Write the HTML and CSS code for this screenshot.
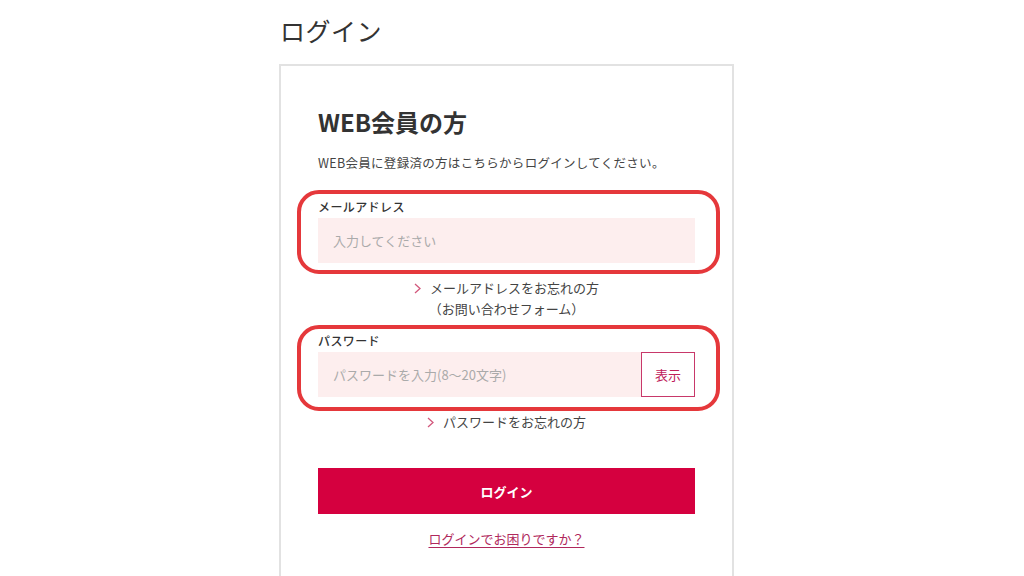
FILE: index.html
```html
<!DOCTYPE html>
<html lang="ja">
<head>
<meta charset="utf-8">
<title>ログイン</title>
<link rel="stylesheet" href="styles.css">
</head>
<body>
<main class="page">
  <h1 class="page-title">ログイン</h1>
  <section class="card">
    <h2 class="card-title">WEB会員の方</h2>
    <p class="lead">WEB会員に登録済の方はこちらからログインしてください。</p>

    <div class="field field-email">
      <label class="field-label">メールアドレス</label>
      <div class="input-row">
        <span class="input">入力してください</span>
      </div>
    </div>
    <div class="help help-email">
      <a class="help-link"><svg class="chev" viewBox="0 0 7 11" width="7" height="11"><polyline points="1,1 6,5.5 1,10" fill="none" stroke="#d2587c" stroke-width="1.3"/></svg>メールアドレスをお忘れの方<br>（お問い合わせフォーム）</a>
    </div>

    <div class="field field-pass">
      <label class="field-label">パスワード</label>
      <div class="input-row">
        <span class="input">パスワードを入力(8〜20文字)</span>
        <span class="show-btn">表示</span>
      </div>
    </div>
    <div class="help help-pass">
      <a class="help-link"><svg class="chev" viewBox="0 0 7 11" width="7" height="11"><polyline points="1,1 6,5.5 1,10" fill="none" stroke="#d2587c" stroke-width="1.3"/></svg>パスワードをお忘れの方</a>
    </div>

    <button class="login-btn" type="button">ログイン</button>
    <div class="trouble"><a class="trouble-link">ログインでお困りですか？</a></div>
  </section>
</main>
</body>
</html>
```

FILE: styles.css
```css
* { box-sizing: border-box; }
html, body { margin: 0; padding: 0; background: #fff; }
body {
  font-family: "Noto Sans CJK JP", "Noto Sans", sans-serif;
  color: #333;
  height: 576px;
  overflow: hidden;
}
.page {
  width: 455px;
  margin-left: 279px;
  padding-top: 12px;
}
.page-title {
  margin: 0 0 16px 1px;
  font-size: 25px;
  line-height: 36px;
  font-weight: 400;
  color: #333;
  letter-spacing: 0.5px;
}
.card {
  border: 2px solid #e2e2e2;
  border-bottom: none;
  padding: 40px 37px 40px;
  min-height: 520px;
}
.card-title {
  margin: 0;
  font-size: 24px;
  line-height: 32px;
  font-weight: 700;
  color: #333;
}
.lead {
  margin: 15px 0 0;
  font-size: 12.5px;
  line-height: 20px;
  letter-spacing: 0.3px;
  color: #444;
}
.field {
  position: relative;
}
.field::before {
  content: "";
  position: absolute;
  left: -21px;
  right: -25px;
  border: 4px solid #e5383b;
  border-radius: 22px;
  pointer-events: none;
}
.field-email { margin-top: 25px; }
.field-email::before { top: -8px; bottom: -11px; }
.field-pass { margin-top: 13px; }
.field-pass::before { top: -7px; bottom: -14px; }
.field-label {
  display: block;
  font-size: 12px;
  line-height: 18px;
  font-weight: 500;
  letter-spacing: 0.4px;
  color: #333;
}
.input-row {
  display: flex;
  margin-top: 2px;
  height: 45px;
}
.input {
  flex: 1;
  display: flex;
  align-items: center;
  padding-left: 15px;
  background: #fdeeee;
  color: #aaa;
  font-size: 13px;
}
.show-btn {
  width: 54px;
  display: flex;
  align-items: center;
  justify-content: center;
  border: 1px solid #c8386a;
  background: #fff;
  color: #c0205a;
  font-size: 13px;
}
.help {
  text-align: center;
  font-size: 13px;
  line-height: 21px;
  color: #444;
}
.help-email { margin-top: 14px; }
.help-pass { margin-top: 14px; }
.help-link { color: #444; text-decoration: none; }
.chev {
  display: inline-block;
  vertical-align: -1px;
  margin-right: 9px;
}
.login-btn {
  display: block;
  width: 100%;
  height: 46px;
  margin-top: 36px;
  border: none;
  background: #d5003f;
  color: #fff;
  font-family: inherit;
  font-size: 13px;
  font-weight: 700;
}
.trouble {
  margin-top: 14px;
  text-align: center;
  font-size: 13px;
  line-height: 21px;
}
.trouble-link {
  color: #b0285c;
  text-decoration: underline;
  text-underline-offset: 3px;
}
```
